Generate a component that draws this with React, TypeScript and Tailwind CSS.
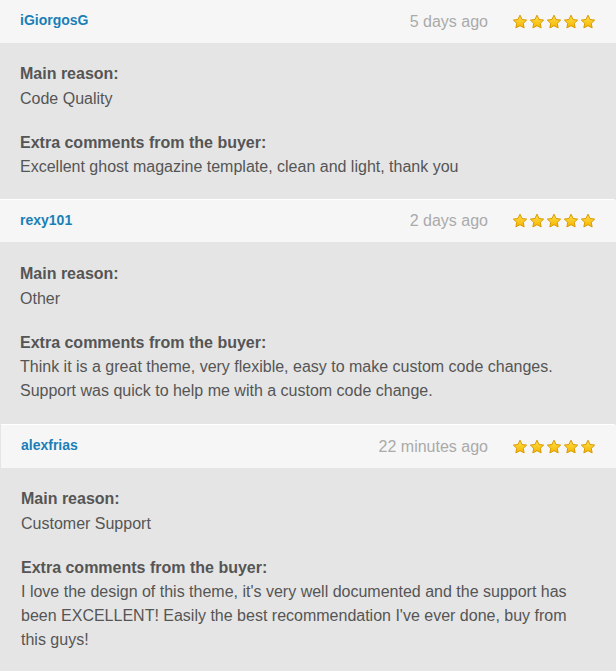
const reviews = [
  {
    user: "iGiorgosG",
    time: "5 days ago",
    reason: "Code Quality",
    comment: "Excellent ghost magazine template, clean and light, thank you",
  },
  {
    user: "rexy101",
    time: "2 days ago",
    reason: "Other",
    comment:
      "Think it is a great theme, very flexible, easy to make custom code changes. Support was quick to help me with a custom code change.",
  },
  {
    user: "alexfrias",
    time: "22 minutes ago",
    reason: "Customer Support",
    comment:
      "I love the design of this theme, it's very well documented and the support has been EXCELLENT! Easily the best recommendation I've ever done, buy from this guys!",
  },
];

// per-card tweaks so the stacked cards line up with the original capture
const headerClasses = [
  "flex h-[43px] items-center bg-[#f6f6f6] px-5",
  "flex h-[43px] items-center rounded-tr-[3px] border-t border-white bg-[#f6f6f6] px-5",
  "flex h-[44px] items-center rounded-tr-[3px] border-t border-white bg-[#f6f6f6] px-5",
];

const bodyClasses = [
  "bg-[#e5e5e5] px-5 pt-[19px] pb-5 text-[16px] leading-6 text-[#555]",
  "bg-[#e5e5e5] px-5 pt-[20px] pb-[21px] text-[16px] leading-6 text-[#555]",
  "bg-[#e5e5e5] pl-5 pr-[24px] pt-[19px] pb-[31px] text-[16px] leading-6 text-[#555]",
];

function Star() {
  return (
    <svg width="16" height="16" viewBox="0 0 16 16">
      <defs>
        <linearGradient id="starFill" x1="0" y1="0" x2="0" y2="1">
          <stop offset="0" stopColor="#ffe04a" />
          <stop offset="1" stopColor="#f7b500" />
        </linearGradient>
      </defs>
      <path
        d="M8 1.2l2.05 4.3 4.6.6-3.37 3.2.85 4.6L8 11.65 3.87 13.9l.85-4.6L1.35 6.1l4.6-.6z"
        fill="url(#starFill)"
        stroke="#d99a00"
        strokeWidth="1"
        strokeLinejoin="round"
      />
    </svg>
  );
}

function Review({
  user,
  time,
  reason,
  comment,
  index,
}: {
  user: string;
  time: string;
  reason: string;
  comment: string;
  index: number;
}) {
  return (
    <div className={index === 2 ? "ml-px" : ""}>
      <div className={headerClasses[index]}>
        <a className="-mt-0.5 text-[14px] font-bold text-[#1a7fb6]">{user}</a>
        <span className="ml-auto text-[16px] text-[#aaaaaa]">{time}</span>
        <div className="ml-6 flex gap-px">
          {[0, 1, 2, 3, 4].map((i) => (
            <Star key={i} />
          ))}
        </div>
      </div>
      <div className={bodyClasses[index]}>
        <p className="font-bold">Main reason:</p>
        <p className="mt-px">{reason}</p>
        <p className="mt-5 font-bold">Extra comments from the buyer:</p>
        <p>{comment}</p>
      </div>
    </div>
  );
}

export default function App() {
  return (
    <div
      className="min-h-screen w-[616px] bg-[#e5e5e5]"
      style={{ fontFamily: '"Liberation Sans", Arial, sans-serif' }}
    >
      {reviews.map((r, i) => (
        <Review key={r.user} {...r} index={i} />
      ))}
    </div>
  );
}
